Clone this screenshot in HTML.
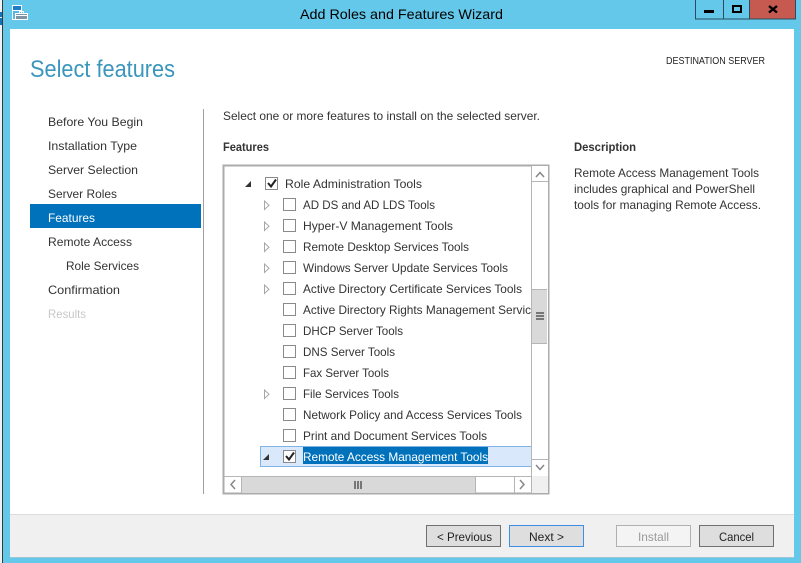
<!DOCTYPE html>
<html><head><meta charset="utf-8"><style>
html,body{margin:0;padding:0;background:#fff;width:801px;height:563px;overflow:hidden}
svg{display:block}
text{font-family:"Liberation Sans",sans-serif;font-size:12px;fill:#333;white-space:pre}
</style></head><body>
<svg width="801" height="563" viewBox="0 0 801 563" xmlns="http://www.w3.org/2000/svg" shape-rendering="crispEdges">
<rect width="801" height="563" fill="#63c8ea"/>
<rect x="0" y="0" width="2" height="563" fill="#eef1f3"/>
<rect x="0" y="12" width="2" height="5" fill="#1a72b8"/>
<rect x="0" y="18" width="2" height="7" fill="#1a72b8"/>
<rect x="2" y="0" width="1" height="563" fill="#3a3a3a"/>
<rect x="10" y="29" width="784" height="486" fill="#fff"/>
<rect x="10" y="515" width="784" height="42" fill="#f0f0f0"/>
<rect x="10" y="514" width="784" height="1" fill="#dcdcdc"/>
<rect x="10" y="557" width="784" height="1" fill="#9fc6d6"/>

<!-- app icon -->
<g>
<rect x="12.5" y="5.5" width="9" height="14" fill="#52b8ea" stroke="#fff"/>
<rect x="13" y="6" width="8" height="4" fill="#1a7fc8"/>
<rect x="13" y="10" width="8" height="1" fill="#fff"/>
<rect x="15.500" y="13.500" width="12" height="6" fill="#7e93a3" stroke="#fff"/>
<rect x="19.500" y="11.500" width="4" height="2" fill="none" stroke="#fff"/>
<rect x="16" y="15" width="11" height="1" fill="#fff"/>
</g>

<!-- window buttons -->
<rect x="695.5" y="-1" width="54" height="20" fill="#63c8ea" stroke="#2b4b5e"/>
<rect x="723" y="0" width="1" height="19" fill="#2b4b5e"/>
<rect x="749.5" y="-1" width="46" height="20" fill="#c75a50" stroke="#2b4b5e"/>
<rect x="704" y="10" width="10" height="3" fill="#000"/>
<rect x="733" y="6" width="8" height="6" fill="none" stroke="#000" stroke-width="2"/>
<path d="M769 6l8 6.500M777 6l-8 6.500" stroke="#000" stroke-width="2.4" fill="none" shape-rendering="auto"/>

<g shape-rendering="auto">
<text x="300" y="19" textLength="203" lengthAdjust="spacingAndGlyphs" style="font-size:14px;fill:#000">Add Roles and Features Wizard</text>
<text x="30" y="77" textLength="145" lengthAdjust="spacingAndGlyphs" style="font-size:24px;fill:#3b96bd">Select features</text>
<text x="666" y="64" textLength="99" lengthAdjust="spacingAndGlyphs" style="font-size:10px;fill:#222">DESTINATION SERVER</text>
</g>

<!-- nav -->
<rect x="30" y="204" width="171" height="24" fill="#0072bc"/>
<rect x="203" y="109" width="1" height="385" fill="#a0a0a0"/>
<g shape-rendering="auto">
<text x="48" y="126" textLength="95" lengthAdjust="spacingAndGlyphs">Before You Begin</text>
<text x="48" y="150" textLength="89" lengthAdjust="spacingAndGlyphs">Installation Type</text>
<text x="48" y="174" textLength="90" lengthAdjust="spacingAndGlyphs">Server Selection</text>
<text x="48" y="198" textLength="69" lengthAdjust="spacingAndGlyphs">Server Roles</text>
<text x="48" y="222" textLength="47" lengthAdjust="spacingAndGlyphs" style="fill:#fff">Features</text>
<text x="48" y="246" textLength="84" lengthAdjust="spacingAndGlyphs">Remote Access</text>
<text x="66" y="270" textLength="73" lengthAdjust="spacingAndGlyphs">Role Services</text>
<text x="48" y="294" textLength="72" lengthAdjust="spacingAndGlyphs">Confirmation</text>
<text x="48" y="318" textLength="38" lengthAdjust="spacingAndGlyphs" style="fill:#c8c8c8">Results</text>

<text x="223" y="120" textLength="317" lengthAdjust="spacingAndGlyphs">Select one or more features to install on the selected server.</text>
<text x="223" y="151" textLength="46" lengthAdjust="spacingAndGlyphs" style="font-weight:bold">Features</text>
<text x="574" y="151" textLength="62" lengthAdjust="spacingAndGlyphs" style="font-weight:bold">Description</text>
<text x="574" y="177" textLength="185" lengthAdjust="spacingAndGlyphs">Remote Access Management Tools</text>
<text x="574" y="193" textLength="181" lengthAdjust="spacingAndGlyphs">includes graphical and PowerShell</text>
<text x="574" y="209" textLength="187" lengthAdjust="spacingAndGlyphs">tools for managing Remote Access.</text>
</g>

<!-- listbox -->
<rect x="223.5" y="165.5" width="325" height="328" fill="#fff" stroke="#ababab" stroke-width="2"/>
<rect x="260.5" y="446.5" width="271" height="20" fill="#d9e9fb" stroke="#7fb2e5"/>
<rect x="303" y="447" width="185" height="17" fill="#0072bc"/>

<!-- checkboxes -->
<g fill="#fff" stroke="#8a8a8a">
<rect x="265.5" y="177.5" width="12" height="12"/>
<rect x="283.5" y="198.5" width="12" height="12"/>
<rect x="283.5" y="219.5" width="12" height="12"/>
<rect x="283.5" y="240.5" width="12" height="12"/>
<rect x="283.5" y="261.5" width="12" height="12"/>
<rect x="283.5" y="282.5" width="12" height="12"/>
<rect x="283.5" y="303.5" width="12" height="12"/>
<rect x="283.5" y="324.5" width="12" height="12"/>
<rect x="283.5" y="345.5" width="12" height="12"/>
<rect x="283.5" y="366.5" width="12" height="12"/>
<rect x="283.5" y="387.5" width="12" height="12"/>
<rect x="283.5" y="408.5" width="12" height="12"/>
<rect x="283.5" y="429.5" width="12" height="12"/>
<rect x="283.5" y="450.5" width="12" height="12"/>
</g>
<g fill="none" stroke="#222" stroke-width="2" shape-rendering="auto">
<path d="M268 183l3 3.500 5-7"/>
<path d="M286 456l3 3.500 5-7"/>
</g>

<!-- expanders -->
<g shape-rendering="auto">
<path d="M251 181v6h-6z" fill="#333"/>
<path d="M269 454v6h-6z" fill="#333"/>
<g fill="#fff" stroke="#a6a6a6">
<path d="M264.500 201v8.500l4.500-4.250z"/>
<path d="M264.500 222v8.500l4.500-4.250z"/>
<path d="M264.500 243v8.500l4.500-4.250z"/>
<path d="M264.500 264v8.500l4.500-4.250z"/>
<path d="M264.500 285v8.500l4.500-4.250z"/>
<path d="M264.500 390v8.500l4.500-4.250z"/>
</g>

<text x="285" y="188" textLength="137" lengthAdjust="spacingAndGlyphs">Role Administration Tools</text>
<text x="303" y="209" textLength="132" lengthAdjust="spacingAndGlyphs">AD DS and AD LDS Tools</text>
<text x="303" y="230" textLength="150" lengthAdjust="spacingAndGlyphs">Hyper-V Management Tools</text>
<text x="303" y="251" textLength="166" lengthAdjust="spacingAndGlyphs">Remote Desktop Services Tools</text>
<text x="303" y="272" textLength="205" lengthAdjust="spacingAndGlyphs">Windows Server Update Services Tools</text>
<text x="303" y="293" textLength="219" lengthAdjust="spacingAndGlyphs">Active Directory Certificate Services Tools</text>
<text x="303" y="314" textLength="228" lengthAdjust="spacingAndGlyphs">Active Directory Rights Management Servic</text>
<text x="303" y="335" textLength="100" lengthAdjust="spacingAndGlyphs">DHCP Server Tools</text>
<text x="303" y="356" textLength="92" lengthAdjust="spacingAndGlyphs">DNS Server Tools</text>
<text x="303" y="377" textLength="86" lengthAdjust="spacingAndGlyphs">Fax Server Tools</text>
<text x="303" y="398" textLength="96" lengthAdjust="spacingAndGlyphs">File Services Tools</text>
<text x="303" y="419" textLength="219" lengthAdjust="spacingAndGlyphs">Network Policy and Access Services Tools</text>
<text x="303" y="440" textLength="184" lengthAdjust="spacingAndGlyphs">Print and Document Services Tools</text>
<text x="303" y="461" textLength="185" lengthAdjust="spacingAndGlyphs" style="fill:#fff">Remote Access Management Tools</text>
</g>

<!-- vertical scrollbar -->
<rect x="532" y="166" width="16" height="310" fill="#fff"/>
<rect x="531" y="166" width="1" height="327" fill="#b5b5b5"/>
<rect x="532" y="181" width="16" height="1" fill="#b5b5b5"/>
<rect x="532" y="459" width="16" height="1" fill="#b5b5b5"/>
<rect x="532" y="289" width="15" height="55" fill="#d9d9d9"/>
<rect x="532" y="289" width="15" height="1" fill="#b5b5b5"/>
<rect x="532" y="343" width="15" height="1" fill="#b5b5b5"/>
<rect x="536" y="312" width="8" height="2" fill="#777"/>
<rect x="536" y="315" width="8" height="2" fill="#777"/>
<rect x="536" y="318" width="8" height="2" fill="#777"/>
<g fill="none" stroke="#888" stroke-width="1.500" shape-rendering="auto">
<path d="M536 177l4-4.500 4 4.500"/>
<path d="M536 465l4 4.500 4-4.500"/>
<path d="M235 480l-4 4.500 4 4.500"/>
<path d="M520 480l4 4.500-4 4.500"/>
</g>

<!-- horizontal scrollbar -->
<rect x="224" y="476" width="308" height="1" fill="#b5b5b5"/>
<rect x="241" y="477" width="234" height="16" fill="#d9d9d9"/>
<rect x="241" y="477" width="1" height="16" fill="#b5b5b5"/>
<rect x="475" y="477" width="1" height="16" fill="#b5b5b5"/>
<rect x="514" y="477" width="1" height="16" fill="#b5b5b5"/>
<rect x="532" y="476" width="16" height="17" fill="#f0f0f0"/>
<rect x="354" y="481" width="2" height="8" fill="#777"/>
<rect x="357" y="481" width="2" height="8" fill="#777"/>
<rect x="360" y="481" width="2" height="8" fill="#777"/>

<!-- footer buttons -->
<rect x="426.500" y="525.500" width="74" height="21" fill="#dedede" stroke="#707070"/>
<rect x="509.500" y="525.500" width="74" height="21" fill="#dedede" stroke="#3c8ee6"/>
<rect x="616.500" y="525.500" width="74" height="21" fill="#f4f4f4" stroke="#b0b0b0"/>
<rect x="699.500" y="525.500" width="74" height="21" fill="#dedede" stroke="#707070"/>
<g shape-rendering="auto">
<text x="437" y="541" textLength="55" lengthAdjust="spacingAndGlyphs" style="fill:#222">&lt; Previous</text>
<text x="529" y="541" textLength="35" lengthAdjust="spacingAndGlyphs" style="fill:#222">Next &gt;</text>
<text x="638" y="541" textLength="31" lengthAdjust="spacingAndGlyphs" style="fill:#9a9a9a">Install</text>
<text x="719" y="541" textLength="35" lengthAdjust="spacingAndGlyphs" style="fill:#222">Cancel</text>
</g>
</svg>
</body></html>
